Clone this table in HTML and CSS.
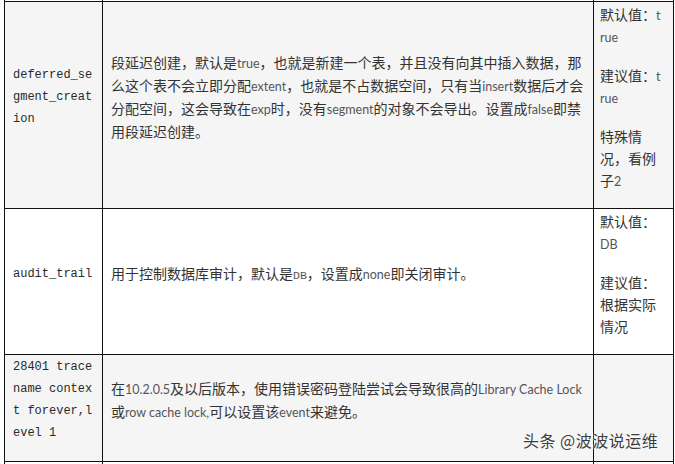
FILE: index.html
```html
<!DOCTYPE html>
<html lang="zh-CN">
<head>
    <meta charset="UTF-8">
    <title>参数说明</title>
    <link rel="stylesheet" href="styles.css">
</head>
<body>
    <div class="page">
        <table class="params">
            <colgroup>
                <col class="c-name">
                <col class="c-desc">
                <col class="c-value">
            </colgroup>
            <tr class="cut">
                <td></td><td></td><td></td>
            </tr>
            <tr class="odd">
                <td class="name"><p>deferred_segment_creation</p></td>
                <td class="desc"><p>段延迟创建，默认是<span class="en">true</span>，也就是新建一个表，并且没有向其中插入数据，那么这个表不会立即分配<span class="en">extent</span>，也就是不占数据空间，只有当<span class="en">insert</span>数据后才会分配空间，这会导致在<span class="en">exp</span>时，没有<span class="en">segment</span>的对象不会导出。设置成<span class="en">false</span>即禁用段延迟创建。</p></td>
                <td class="value">
                    <p>默认值：<span class="en">true</span></p>
                    <p>建议值：<span class="en">true</span></p>
                    <p>特殊情况，看例子<span class="en">2</span></p>
                </td>
            </tr>
            <tr>
                <td class="name"><p>audit_trail</p></td>
                <td class="desc"><p>用于控制数据库审计，默认是<span class="mono">DB</span>，设置成<span class="en">none</span>即关闭审计。</p></td>
                <td class="value">
                    <p>默认值：<span class="en">DB</span></p>
                    <p>建议值：根据实际情况</p>
                </td>
            </tr>
            <tr class="odd">
                <td class="name"><p>28401 trace name context forever,level 1</p></td>
                <td class="desc"><p>在<span class="en">10.2.0.5</span>及以后版本，使用错误密码登陆尝试会导致很高的<span class="en">Library Cache Lock</span>或<span class="en">row cache lock,</span>可以设置该<span class="en">event</span>来避免。</p></td>
                <td class="value"></td>
            </tr>
            <tr>
                <td class="name"><p>&nbsp;</p></td>
                <td class="desc"><p>&nbsp;</p></td>
                <td class="value"><p>&nbsp;</p></td>
            </tr>
        </table>
        <div class="watermark">头条 @波波说运维</div>
    </div>
</body>
</html>
```

FILE: styles.css
```css
body {
    margin: 0;
    background-color: #fff;
    color: #333;
    font-family: "Noto Sans CJK SC", sans-serif;
    overflow: hidden;
}
.page {
    position: relative;
    padding-left: 4px;
    height: 464px;
}
.params {
    border-collapse: collapse;
    table-layout: fixed;
    width: 669px;
}
.c-name {
    width: 98px;
}
.c-desc {
    width: 491px;
}
.c-value {
    width: 80px;
}
.params td {
    border: 1px solid #111;
    vertical-align: middle;
    word-break: break-all;
    font-size: 14px;
    line-height: 22px;
    padding: 1px 8px 0;
}
.params p {
    margin: 0 0 17px;
}
.params .cut td {
    border-top: none;
    height: 1px;
    padding: 0;
    line-height: 1px;
}
.odd td {
    background-color: #f5f5f5;
}
.params .name {
    font-family: "Liberation Mono", monospace;
    font-size: 12px;
    color: #2a2a2a;
}
.params .desc {
    line-height: 23px;
}
.params .value {
    padding: 1px 9px 0 6px;
}
.en {
    font-family: Lato, sans-serif;
    font-size: 12.5px;
    line-height: 1;
    color: #555;
}
.mono {
    font-family: "Liberation Mono", monospace;
    font-size: 11.5px;
    line-height: 1;
    color: #555;
}
.watermark {
    position: absolute;
    left: 523px;
    top: 428px;
    font-size: 16px;
    color: #3c3c3c;
    letter-spacing: 0.5px;
    text-shadow: 0 0 2px #fff, 0 0 2px #fff;
}
```
